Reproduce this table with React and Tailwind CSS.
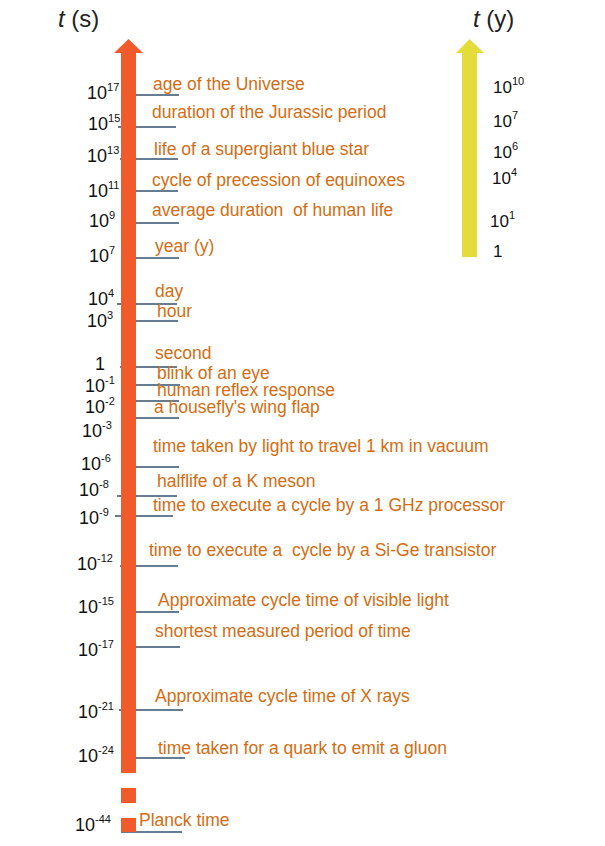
import React from "react";

const labels = [
  { t: "age of the Universe", c: "left-[153px] top-[76px]" },
  { t: "duration of the Jurassic period", c: "left-[152px] top-[104px]" },
  { t: "life of a supergiant blue star", c: "left-[154px] top-[141px]" },
  { t: "cycle of precession of equinoxes", c: "left-[152px] top-[172px]" },
  { t: "average duration  of human life", c: "left-[152px] top-[202px]" },
  { t: "year (y)", c: "left-[155px] top-[238px]" },
  { t: "day", c: "left-[155px] top-[283px]" },
  { t: "hour", c: "left-[157px] top-[303px]" },
  { t: "second", c: "left-[155px] top-[345px]" },
  { t: "blink of an eye", c: "left-[157px] top-[365px]" },
  { t: "human reflex response", c: "left-[157px] top-[382px]" },
  { t: "a housefly's wing flap", c: "left-[154px] top-[399px]" },
  { t: "time taken by light to travel 1 km in vacuum", c: "left-[153px] top-[438px]" },
  { t: "halflife of a K meson", c: "left-[157px] top-[473px]" },
  { t: "time to execute a cycle by a 1 GHz processor", c: "left-[153px] top-[497px]" },
  { t: "time to execute a  cycle by a Si-Ge transistor", c: "left-[149px] top-[542px]" },
  { t: "Approximate cycle time of visible light", c: "left-[158px] top-[592px]" },
  { t: "shortest measured period of time", c: "left-[155px] top-[623px]" },
  { t: "Approximate cycle time of X rays", c: "left-[155px] top-[688px]" },
  { t: "time taken for a quark to emit a gluon", c: "left-[158px] top-[740px]" },
  { t: "Planck time", c: "left-[139px] top-[812px]" },
];

const leftNums = [
  { b: "10", e: "17", c: "left-[87px] top-[84px]" },
  { b: "10", e: "15", c: "left-[88px] top-[115px]" },
  { b: "10", e: "13", c: "left-[87px] top-[147px]" },
  { b: "10", e: "11", c: "left-[88px] top-[182px]" },
  { b: "10", e: "9", c: "left-[89px] top-[212px]" },
  { b: "10", e: "7", c: "left-[89px] top-[247px]" },
  { b: "10", e: "4", c: "left-[88px] top-[290px]" },
  { b: "10", e: "3", c: "left-[87px] top-[312px]" },
  { b: "1", e: "", c: "left-[95px] top-[355px]" },
  { b: "10", e: "-1", c: "left-[85px] top-[377px]" },
  { b: "10", e: "-2", c: "left-[85px] top-[398px]" },
  { b: "10", e: "-3", c: "left-[82px] top-[422px]" },
  { b: "10", e: "-6", c: "left-[81px] top-[455px]" },
  { b: "10", e: "-8", c: "left-[79px] top-[481px]" },
  { b: "10", e: "-9", c: "left-[79px] top-[509px]" },
  { b: "10", e: "-12", c: "left-[77px] top-[555px]" },
  { b: "10", e: "-15", c: "left-[78px] top-[598px]" },
  { b: "10", e: "-17", c: "left-[78px] top-[641px]" },
  { b: "10", e: "-21", c: "left-[78px] top-[703px]" },
  { b: "10", e: "-24", c: "left-[78px] top-[747px]" },
  { b: "10", e: "-44", c: "left-[75px] top-[816px]" },
];

const rightNums = [
  { b: "10", e: "10", c: "left-[493px] top-[79px]" },
  { b: "10", e: "7", c: "left-[493px] top-[113px]" },
  { b: "10", e: "6", c: "left-[493px] top-[144px]" },
  { b: "10", e: "4", c: "left-[492px] top-[170px]" },
  { b: "10", e: "1", c: "left-[490px] top-[213px]" },
  { b: "1", e: "", c: "left-[493px] top-[243px]" },
];

const ticks = [
  [95, 121, 179],
  [127, 118, 176],
  [159, 120, 178],
  [191, 121, 178],
  [223, 121, 179],
  [258, 121, 179],
  [304, 117, 177],
  [321, 121, 178],
  [367, 120, 177],
  [385, 121, 180],
  [401, 121, 179],
  [418, 121, 179],
  [467, 121, 179],
  [496, 117, 177],
  [516, 115, 173],
  [566, 120, 178],
  [612, 121, 179],
  [647, 121, 180],
  [710, 119, 183],
  [758, 121, 185],
  [832, 121, 182],
];

function Diagram() {
  return (
    <svg
      className="absolute left-0 top-0"
      width="605"
      height="846"
      viewBox="0 0 605 846"
    >
      {ticks.map(([y, x1, x2], i) => (
        <line
          key={i}
          x1={x1}
          x2={x2}
          y1={y}
          y2={y}
          stroke="#33506b"
          strokeWidth="1.4"
        />
      ))}
      {/* orange arrow */}
      <polygon points="128.5,39 114,53 143,53" fill="#f15a2a" />
      <rect x="121" y="52.5" width="15" height="720.5" fill="#f15a2a" />
      <rect x="121" y="788" width="15" height="15" fill="#f15a2a" />
      <rect x="121" y="818" width="15" height="14" fill="#f15a2a" />
      {/* yellow arrow */}
      <polygon points="469.5,39 456,53 484,53" fill="#e4dc3b" />
      <rect x="462" y="52.5" width="15" height="204.5" fill="#e4dc3b" />
    </svg>
  );
}

function Num({ b, e, c, size }) {
  return (
    <span className={`absolute leading-none text-[#111] whitespace-nowrap ${size} ${c}`}>
      {b}
      {e && <span className="relative -top-[8px] text-[11px] leading-none">{e}</span>}
    </span>
  );
}

export default function App() {
  return (
    <div
      className="relative w-[605px] h-[846px] bg-white overflow-hidden"
      style={{ fontFamily: '"Liberation Sans", Arial, sans-serif' }}
    >
      <Diagram />
      <div className="absolute left-[58px] top-[7px] text-[24px] leading-none text-[#222] whitespace-pre">
        <span className="italic">t</span> (s)
      </div>
      <div className="absolute left-[473px] top-[7px] text-[24px] leading-none text-[#222] whitespace-pre">
        <span className="italic">t</span> (y)
      </div>
      {labels.map((l, i) => (
        <span
          key={i}
          className={`absolute text-[17.5px] leading-none text-[#d46d12] whitespace-pre ${l.c}`}
        >
          {l.t}
        </span>
      ))}
      {leftNums.map((n, i) => (
        <Num key={i} {...n} size="text-[18px]" />
      ))}
      {rightNums.map((n, i) => (
        <Num key={i} {...n} size="text-[17px]" />
      ))}
    </div>
  );
}
